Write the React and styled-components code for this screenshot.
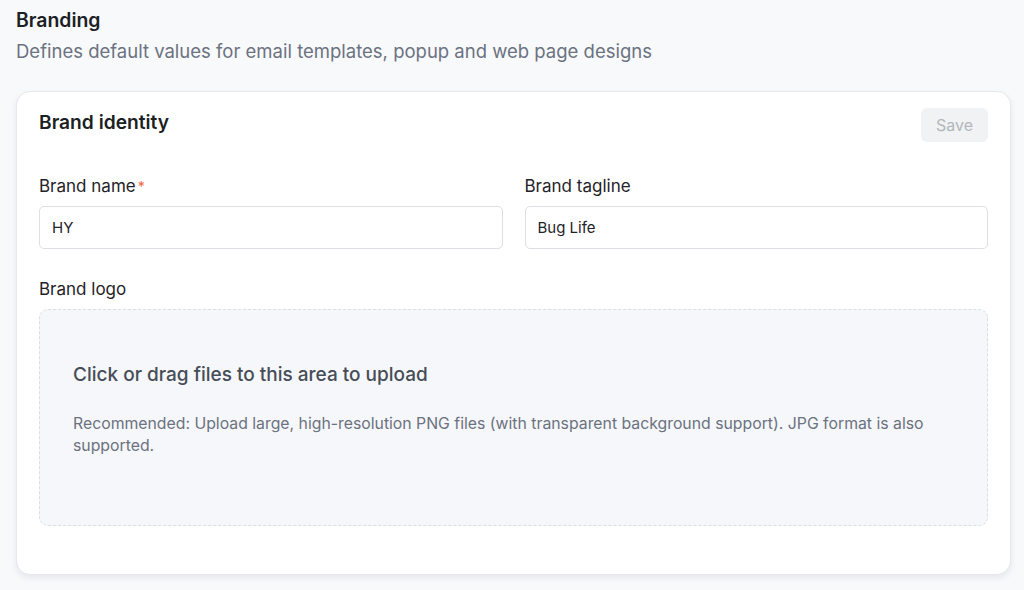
import React from 'react';
import styled, { createGlobalStyle } from 'styled-components';

const GlobalStyle = createGlobalStyle`
  * { box-sizing: border-box; }
  body {
    margin: 0;
    background: #f8f9fb;
    font-family: Inter, "Noto Sans", sans-serif;
    color: #1f2328;
    -webkit-font-smoothing: antialiased;
  }
`;

const Page = styled.div`
  padding: 8px 13px 16px 16px;
  height: 590px;
`;

const PageTitle = styled.h1`
  margin: 0;
  font-size: 19.4px;
  line-height: 24px;
  font-weight: 600;
  color: #1c1f24;
`;

const PageSubtitle = styled.p`
  margin: 7px 0 0;
  font-size: 18.5px;
  line-height: 24px;
  color: #6b7280;
`;

const Card = styled.section`
  margin-top: 28px;
  background: #fff;
  border: 1px solid #e6e8ec;
  border-radius: 14px;
  box-shadow: 0 3px 6px rgba(17, 24, 39, 0.08);
  padding: 16px 22px 48px;
`;

const CardHeader = styled.div`
  display: flex;
  justify-content: space-between;
  align-items: flex-start;
`;

const CardTitle = styled.h2`
  margin: 2px 0 0;
  font-size: 19.2px;
  line-height: 24px;
  font-weight: 600;
  color: #1c1f24;
`;

const SaveButton = styled.button`
  width: 67px;
  height: 34px;
  border: none;
  border-radius: 6px;
  background: #f0f2f4;
  color: #b3b7bd;
  font-family: inherit;
  font-size: 16px;
  cursor: not-allowed;
`;

const FieldRow = styled.div`
  display: grid;
  grid-template-columns: 1fr 1fr;
  gap: 22px;
  margin-top: 35px;
`;

const Field = styled.div`
  display: flex;
  flex-direction: column;
  gap: 10px;
  margin-top: ${p => (p.spaced ? '31px' : '0')};
`;

const Label = styled.label`
  font-size: 17px;
  line-height: 19px;
  color: #1f2328;
`;

const Required = styled.span`
  color: #f0643a;
  margin-left: 2px;
  font-size: 14px;
  vertical-align: top;
`;

const Input = styled.input`
  height: 43px;
  border: 1px solid #dcdfe4;
  border-radius: 5px;
  padding: 0 12px;
  font-family: inherit;
  font-size: 15px;
  color: #1f2328;
  background: #fff;
  outline: none;
`;

const DropZone = styled.div`
  height: 217px;
  border: 1px dashed #d9dde5;
  border-radius: 9px;
  background: #f6f7fa;
  padding: 52px 33px 0;
`;

const DropTitle = styled.div`
  font-size: 19px;
  line-height: 26px;
  font-weight: 500;
  color: #474d57;
`;

const DropHint = styled.div`
  margin-top: 25px;
  font-size: 15.8px;
  line-height: 22px;
  color: #6b7280;
`;

export default function App() {
  return (
    <>
      <GlobalStyle />
      <Page>
        <PageTitle>Branding</PageTitle>
        <PageSubtitle>Defines default values for email templates, popup and web page designs</PageSubtitle>
        <Card>
          <CardHeader>
            <CardTitle>Brand identity</CardTitle>
            <SaveButton disabled>Save</SaveButton>
          </CardHeader>
          <FieldRow>
            <Field>
              <Label>Brand name<Required>*</Required></Label>
              <Input defaultValue="HY" />
            </Field>
            <Field>
              <Label>Brand tagline</Label>
              <Input defaultValue="Bug Life" />
            </Field>
          </FieldRow>
          <Field spaced>
            <Label>Brand logo</Label>
            <DropZone>
              <DropTitle>Click or drag files to this area to upload</DropTitle>
              <DropHint>
                Recommended: Upload large, high-resolution PNG files (with transparent background support). JPG format is also supported.
              </DropHint>
            </DropZone>
          </Field>
        </Card>
      </Page>
    </>
  );
}
